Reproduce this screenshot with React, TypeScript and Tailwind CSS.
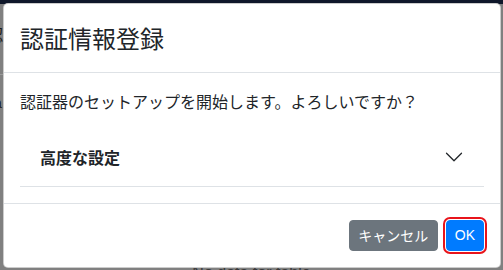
import React from "react";

const jp = { fontFamily: '"Noto Sans CJK JP", "Noto Sans", sans-serif' };

export default function App() {
  return (
    <div className="relative w-[503px] h-[270px] overflow-hidden bg-[#808080]" style={jp}>
      {/* page behind the backdrop */}
      <div className="flex flex-col h-full">
        <div className="h-[4px] bg-[#0f172a]" />
        <div className="flex-1 relative">
          <div className="ml-[-13px] mt-[20px] text-[16px] leading-[20px] text-[#1a1a1a]">認</div>
          <div className="mt-[30px] h-px w-[12px] bg-[#9a9a9a]" />
          <div className="ml-[-6px] mt-[18px] text-[14px] leading-[20px] text-[#1a1a1a]" style={{ fontFamily: '"Liberation Sans", sans-serif' }}>a</div>
        </div>
        <div
          className="h-[6px] text-center text-[16px] leading-[24px] text-[#3a3a3a] overflow-visible"
          style={{ fontFamily: '"Liberation Sans", Arial, sans-serif' }}
        >
          <div className="mt-[-3px]">No data for table</div>
        </div>
      </div>

      {/* modal */}
      <div className="absolute left-[3px] top-[3px] w-[498px] bg-white border border-[rgba(0,0,0,0.2)] rounded-[5px] flex flex-col text-[#212529]">
        <div className="px-4 py-4 border-b border-[#dee2e6]">
          <h5 className="text-[24px] leading-[36px] font-normal">認証情報登録</h5>
        </div>
        <div className="p-4">
          <p className="text-[16px] leading-[24px] mb-4">認証器のセットアップを開始します。よろしいですか？</p>
          <div className="border-b border-[#dee2e6]">
            <div className="flex items-center justify-between px-5 pt-4 pb-[17px]">
              <span className="text-[16px] leading-[24px] font-bold">高度な設定</span>
              <svg width="20" height="20" viewBox="0 0 16 16" fill="none" stroke="#212529" strokeLinecap="round" strokeLinejoin="round" strokeWidth="1">
                <path d="M2 5L8 11L14 5" />
              </svg>
            </div>
          </div>
        </div>
        <div className="border-t border-[#dee2e6] px-3 py-3 flex justify-end items-center">
          <button className="m-1 h-[31px] w-[89px] px-2 rounded-[4px] bg-[#6c757d] text-white text-[14px] leading-[21px] border border-[#6c757d]">
            キャンセル
          </button>
          <button
            className="m-1 h-[31px] px-2 rounded-[4px] bg-[#007bff] text-white text-[14px] leading-[21px] border border-[#007bff] outline-2 outline-[#e8141b] outline-offset-1"
            style={{ fontFamily: '"Liberation Sans", Arial, sans-serif', outlineStyle: "solid" }}
          >
            OK
          </button>
        </div>
      </div>
    </div>
  );
}
